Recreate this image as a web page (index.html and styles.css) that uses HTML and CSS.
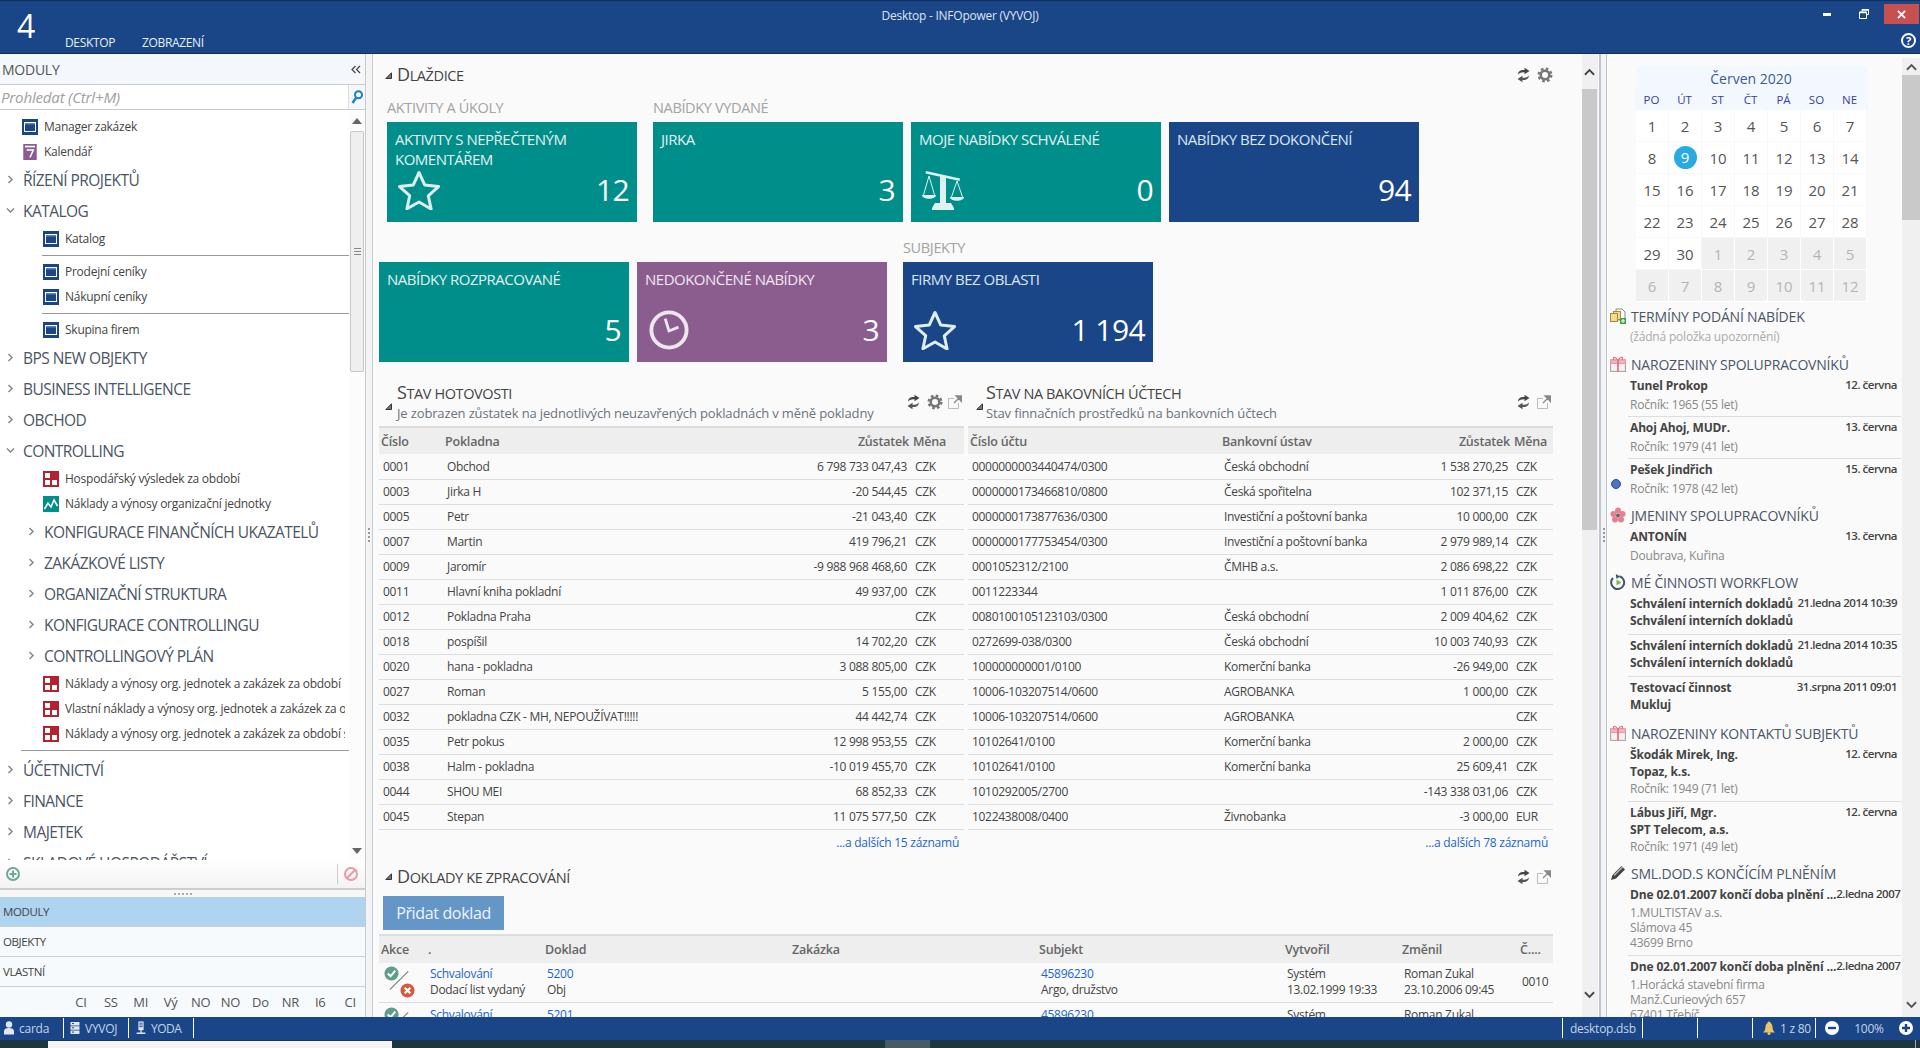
FILE: index.html
```html
<!DOCTYPE html>
<html lang="cs">
<head>
<meta charset="utf-8">
<title>Desktop - INFOpower (VYVOJ)</title>
<link rel="stylesheet" href="styles.css">
</head>
<body>
<svg class="defs" xmlns="http://www.w3.org/2000/svg">
  <symbol id="i-win" viewBox="0 0 16 16"><rect width="16" height="16" fill="#1a4687"/><rect x="2.500" y="3.500" width="11" height="9" fill="#1a4687" stroke="#fff"/><rect x="3" y="4" width="10" height="1.500" fill="#5d82b8"/></symbol>
  <symbol id="i-cal" viewBox="0 0 16 19"><rect width="16" height="19" fill="#8b5d8f"/><rect x="2" y="2" width="12" height="2" fill="#fff"/><path d="M4 7h8L8 16" fill="none" stroke="#fff" stroke-width="1.800"/></symbol>
  <symbol id="i-rep" viewBox="0 0 16 16"><rect width="16" height="16" fill="#b3222f"/><rect x="2" y="2" width="5" height="5" fill="#fff"/><rect x="9" y="2" width="5" height="5" fill="#fff"/><rect x="2" y="9" width="5" height="5" fill="#fff"/><rect x="9" y="9" width="5" height="5" fill="#fff"/><path d="M11.500 0l4 3-1.500 4h-5L8 3z" fill="#b3222f"/></symbol>
  <symbol id="i-chart" viewBox="0 0 16 16"><rect width="16" height="16" fill="#008e8a"/><path d="M1.500 13L5 7l3 4 3-7 3.500 6" fill="none" stroke="#fff" stroke-width="1.500"/></symbol>
  <symbol id="i-right" viewBox="0 0 6 9"><path d="M1 1l3.500 3.500L1 8" fill="none" stroke="#888" stroke-width="1.500"/></symbol>
  <symbol id="i-down" viewBox="0 0 9 6"><path d="M1 1l3.500 3.500L8 1" fill="none" stroke="#888" stroke-width="1.500"/></symbol>
  <symbol id="i-tri" viewBox="0 0 7 7"><path d="M6.500.8V6.500H.8z" fill="#777" stroke="#333"/></symbol>
  <symbol id="i-sync" viewBox="0 0 13 16"><path d="M1 7.500C1.200 4 4 2.700 7.500 3V.8L12.500 4 7.500 7.300V5.300C5 5 2.700 5.700 1 7.500z" fill="#444"/><path d="M12 8.500C11.800 12 9 13.300 5.500 13V15.200L.5 12 5.500 8.700V10.700C8 11 10.300 10.300 12 8.500z" fill="#555"/></symbol>
  <symbol id="i-gear" viewBox="0 0 16 16"><circle cx="8" cy="8" r="4.300" fill="none" stroke="#777" stroke-width="2.600"/><circle cx="8" cy="8" r="6.300" fill="none" stroke="#777" stroke-width="2.400" stroke-dasharray="2.600 2.350"/></symbol>
  <symbol id="i-exp" viewBox="0 0 14 14"><path d="M10.500 8v5.500h-10v-10H6" fill="none" stroke="#bbb"/><path d="M6 8l5-5M8 1h5.500v5.500z" fill="#888" stroke="#888" stroke-width="1.300"/></symbol>
  <symbol id="i-star" viewBox="0 0 42 40"><path d="M21 2.500l5.800 12.600 13.700 1.500-10.200 9.300 2.800 13.100L21 32l-12.100 6.800 2.800-13.100L1.500 16.600l13.700-1.500z" fill="none" stroke="#dceeee" stroke-width="3" stroke-linejoin="round"/></symbol>
  <symbol id="i-clock" viewBox="0 0 42 42"><circle cx="21" cy="21" r="18.500" fill="none" stroke="#eee6ee" stroke-width="4"/><path d="M17 9l4 13 10-4" fill="none" stroke="#eee6ee" stroke-width="3"/></symbol>
  <symbol id="i-scale" viewBox="0 0 42 40"><path d="M4 1l34 7.500-.5 2.500L3.500 3.500z" fill="#dff0f0"/><path d="M18 6h6v27h-6z" fill="#dff0f0"/><path d="M10 38l3-5h16l3 5v2H10z" fill="#dff0f0"/><path d="M7 6L1.500 25M7 6l5.500 19M35 11l-5.500 16M35 11l5.500 16" stroke="#dff0f0" fill="none"/><path d="M0 25h14c0 5-14 5-14 0zM28 27h14c0 5-14 5-14 0z" fill="#dff0f0"/></symbol>
  <symbol id="i-gift" viewBox="0 0 14 14"><rect x=".5" y="3.500" width="13" height="10" fill="#fbeef0" stroke="#aaa"/><rect x=".5" y="3.500" width="13" height="3" fill="#f3b9c2" stroke="#e79aa6"/><path d="M7 3.500v10" stroke="#e06f82" stroke-width="1.500"/><path d="M7 3.500C4 0 2 1 3.500 3.500M7 3.500c3-3.500 5-2.500 3.500 0" fill="none" stroke="#e06f82"/></symbol>
  <symbol id="i-flower" viewBox="0 0 16 16"><g fill="#e77f91"><circle cx="8" cy="3.500" r="3"/><circle cx="3.500" cy="7" r="3"/><circle cx="12.500" cy="7" r="3"/><circle cx="5" cy="12.500" r="3"/><circle cx="11" cy="12.500" r="3"/></g><circle cx="8" cy="8.500" r="2" fill="#666"/></symbol>
  <symbol id="i-wf" viewBox="0 0 16 16"><path d="M9.500 2.300A6.500 6.500 0 1 1 3 4" fill="none" stroke="#3f5568" stroke-width="2"/><path d="M5.800 0L10 2.500 6.500 5z" fill="#3f5568"/><path d="M6.500 5.500l5 3-5 3z" fill="#7fb356"/></symbol>
  <symbol id="i-pen" viewBox="0 0 16 16"><path d="M1 15l1.500-5L11.500 1l3.500 3.500-9 9z" fill="#444"/><path d="M3.500 10L12 1.500l1 1L4.500 11z" fill="#bbb"/></symbol>
  <symbol id="i-docs" viewBox="0 0 16 16"><path d="M6 1h6l3 3v8H6z" fill="#fff" stroke="#888"/><rect x="3.500" y="3.500" width="7" height="8" fill="#f3dc8b" stroke="#a58c3c"/><rect x=".5" y="5.500" width="7" height="8" fill="#f3dc8b" stroke="#a58c3c"/><rect x="10" y="10" width="6" height="6" fill="#3fa34a"/><path d="M13 11v4M11 13h4" stroke="#fff"/></symbol>
  <symbol id="i-ok" viewBox="0 0 16 16"><circle cx="8" cy="8" r="7.500" fill="#5f9d8c"/><path d="M4 8l3 3 5-6" fill="none" stroke="#fff" stroke-width="2.200"/></symbol>
  <symbol id="i-no" viewBox="0 0 16 16"><circle cx="8" cy="8" r="7.500" fill="#d9583f"/><path d="M5 5l6 6M11 5l-6 6" stroke="#fff" stroke-width="2.400"/></symbol>
</svg>

<div class="app">
  <header class="topbar">
    <div class="top-left">
      <span class="logo">4</span>
      <nav class="tabs"><span class="tab">DESKTOP</span><span class="tab">ZOBRAZENÍ</span></nav>
    </div>
    <div class="title">Desktop - INFOpower (VYVOJ)</div>
    <div class="top-right">
      <div class="winctl">
        <span class="wmin"></span>
        <svg class="wres" viewBox="0 0 10 10"><path d="M3 2.500V.5h6.500v5H7.500M.5 3h7v6.500h-7z" fill="none" stroke="#fff"/><path d="M.5 3.500h7M3 1h6.500" stroke="#fff" stroke-width="1.500"/></svg>
        <span class="wclose"><svg viewBox="0 0 10 10"><path d="M1 1l8 8M9 1l-8 8" stroke="#fff" stroke-width="2"/></svg></span>
      </div>
      <span class="help">?</span>
    </div>
  </header>

  <div class="work">
    <aside class="side">
      <div class="side-head"><span>MODULY</span>
        <svg class="collapse" viewBox="0 0 10 9"><path d="M4.500 1L1 4.500 4.500 8M9 1L5.500 4.500 9 8" fill="none" stroke="#444" stroke-width="1.200"/></svg>
      </div>
      <div class="search"><span class="ph">Prohledat (Ctrl+M)</span>
        <span class="sbtn"><svg viewBox="0 0 12 14"><circle cx="7.500" cy="4.800" r="3.500" fill="none" stroke="#1b7dc2" stroke-width="2"/><path d="M5 8l-3.500 5" stroke="#1b7dc2" stroke-width="2.400"/></svg></span>
      </div>
      <div class="treewrap">
        <div class="tree">
          <div class="item l1"><svg class="ic"><use href="#i-win"/></svg>Manager zakázek</div>
          <div class="item l1"><svg class="ic"><use href="#i-cal"/></svg>Kalendář</div>
          <div class="grp"><svg class="chev"><use href="#i-right"/></svg>ŘÍZENÍ PROJEKTŮ</div>
          <div class="grp"><svg class="chev"><use href="#i-down"/></svg>KATALOG</div>
          <div class="item l2"><svg class="ic"><use href="#i-win"/></svg>Katalog</div>
          <div class="sep"></div>
          <div class="item l2"><svg class="ic"><use href="#i-win"/></svg>Prodejní ceníky</div>
          <div class="item l2"><svg class="ic"><use href="#i-win"/></svg>Nákupní ceníky</div>
          <div class="sep"></div>
          <div class="item l2"><svg class="ic"><use href="#i-win"/></svg>Skupina firem</div>
          <div class="grp"><svg class="chev"><use href="#i-right"/></svg>BPS NEW OBJEKTY</div>
          <div class="grp"><svg class="chev"><use href="#i-right"/></svg>BUSINESS INTELLIGENCE</div>
          <div class="grp"><svg class="chev"><use href="#i-right"/></svg>OBCHOD</div>
          <div class="grp"><svg class="chev"><use href="#i-down"/></svg>CONTROLLING</div>
          <div class="item l2"><svg class="ic"><use href="#i-rep"/></svg>Hospodářský výsledek za období</div>
          <div class="item l2"><svg class="ic"><use href="#i-chart"/></svg>Náklady a výnosy organizační jednotky</div>
          <div class="grp nest"><svg class="chev"><use href="#i-right"/></svg>KONFIGURACE FINANČNÍCH UKAZATELŮ</div>
          <div class="grp nest"><svg class="chev"><use href="#i-right"/></svg>ZAKÁZKOVÉ LISTY</div>
          <div class="grp nest"><svg class="chev"><use href="#i-right"/></svg>ORGANIZAČNÍ STRUKTURA</div>
          <div class="grp nest"><svg class="chev"><use href="#i-right"/></svg>KONFIGURACE CONTROLLINGU</div>
          <div class="grp nest"><svg class="chev"><use href="#i-right"/></svg>CONTROLLINGOVÝ PLÁN</div>
          <div class="item l2"><svg class="ic"><use href="#i-rep"/></svg>Náklady a výnosy org. jednotek a zakázek za období</div>
          <div class="item l2"><svg class="ic"><use href="#i-rep"/></svg>Vlastní náklady a výnosy org. jednotek a zakázek za období</div>
          <div class="item l2"><svg class="ic"><use href="#i-rep"/></svg>Náklady a výnosy org. jednotek a zakázek za období s</div>
          <div class="sep wide"></div>
          <div class="grp"><svg class="chev"><use href="#i-right"/></svg>ÚČETNICTVÍ</div>
          <div class="grp"><svg class="chev"><use href="#i-right"/></svg>FINANCE</div>
          <div class="grp"><svg class="chev"><use href="#i-right"/></svg>MAJETEK</div>
          <div class="grp"><svg class="chev"><use href="#i-right"/></svg>SKLADOVÉ HOSPODÁŘSTVÍ</div>
        </div>
        <div class="tree-scroll">
          <svg class="arrow" viewBox="0 0 10 6"><path d="M5 0l5 6H0z" fill="#666"/></svg>
          <div class="tree-thumb"><span class="grip"></span></div>
          <div class="tree-rest"></div>
          <svg class="arrow" viewBox="0 0 10 6"><path d="M5 6l5-6H0z" fill="#666"/></svg>
        </div>
      </div>
      <div class="side-tools">
        <svg class="tool" viewBox="0 0 14 14"><circle cx="7" cy="7" r="6" fill="none" stroke="#6fa798" stroke-width="2"/><path d="M7 3.500v7M3.500 7h7" stroke="#6fa798" stroke-width="2"/></svg>
        <span class="tool-sep"></span>
        <svg class="tool" viewBox="0 0 14 14"><circle cx="7" cy="7" r="6" fill="none" stroke="#e89aa8" stroke-width="2"/><path d="M3 11l8-8" stroke="#e89aa8" stroke-width="2"/></svg>
      </div>
      <div class="side-split"><span class="hdots"></span></div>
      <div class="nav-tab active">MODULY</div>
      <div class="nav-tab">OBJEKTY</div>
      <div class="nav-tab">VLASTNÍ</div>
      <div class="nav-mini"><span>CI</span><span>SS</span><span>MI</span><span>Vý</span><span>NO</span><span>NO</span><span>Do</span><span>NR</span><span>I6</span><span>CI</span></div>
    </aside>

    <div class="split"><span class="vdots"></span></div>

    <main class="main">
      <div class="sec-head tiles-head">
        <svg class="tri"><use href="#i-tri"/></svg>
        <h2 class="sec-title">Dlaždice</h2>
        <span class="acts"><svg class="a-sync"><use href="#i-sync"/></svg><svg class="a-gear"><use href="#i-gear"/></svg></span>
      </div>

      <div class="tile-row first">
        <section class="tgroup">
          <div class="tlabel">AKTIVITY A ÚKOLY</div>
          <div class="tiles">
            <article class="tile teal"><div class="t-name">AKTIVITY S NEPŘEČTENÝM KOMENTÁŘEM</div><div class="t-foot"><svg class="t-ic"><use href="#i-star"/></svg><span class="t-num">12</span></div></article>
          </div>
        </section>
        <section class="tgroup">
          <div class="tlabel">NABÍDKY VYDANÉ</div>
          <div class="tiles">
            <article class="tile teal"><div class="t-name">JIRKA</div><div class="t-foot"><span class="t-num">3</span></div></article>
            <article class="tile teal"><div class="t-name">MOJE NABÍDKY SCHVÁLENÉ</div><div class="t-foot"><svg class="t-ic"><use href="#i-scale"/></svg><span class="t-num">0</span></div></article>
            <article class="tile navy"><div class="t-name">NABÍDKY BEZ DOKONČENÍ</div><div class="t-foot"><span class="t-num">94</span></div></article>
          </div>
        </section>
      </div>

      <div class="tile-row second">
        <section class="tgroup">
          <div class="tlabel">&nbsp;</div>
          <div class="tiles">
            <article class="tile teal"><div class="t-name">NABÍDKY ROZPRACOVANÉ</div><div class="t-foot"><span class="t-num">5</span></div></article>
            <article class="tile purple"><div class="t-name">NEDOKONČENÉ NABÍDKY</div><div class="t-foot"><svg class="t-ic"><use href="#i-clock"/></svg><span class="t-num">3</span></div></article>
          </div>
        </section>
        <section class="tgroup">
          <div class="tlabel">SUBJEKTY</div>
          <div class="tiles">
            <article class="tile navy"><div class="t-name">FIRMY BEZ OBLASTI</div><div class="t-foot"><svg class="t-ic"><use href="#i-star"/></svg><span class="t-num">1 194</span></div></article>
          </div>
        </section>
      </div>

      <div class="cols">
        <section class="col first-col">
          <div class="col-head">
            <svg class="tri"><use href="#i-tri"/></svg>
            <div class="col-titles"><h2 class="sec-title">Stav hotovosti</h2><p class="col-sub">Je zobrazen zůstatek na jednotlivých neuzavřených pokladnách v měně pokladny</p></div>
            <span class="acts"><svg class="a-sync"><use href="#i-sync"/></svg><svg class="a-gear"><use href="#i-gear"/></svg><svg class="a-exp"><use href="#i-exp"/></svg></span>
          </div>
          <table class="grid cash">
            <colgroup><col class="c1"><col class="c2"><col class="c3"><col class="c4"></colgroup>
            <thead><tr><th>Číslo</th><th>Pokladna</th><th class="r">Zůstatek</th><th>Měna</th></tr></thead>
            <tbody>
              <tr><td>0001</td><td>Obchod</td><td class="r">6 798 733 047,43</td><td>CZK</td></tr>
              <tr><td>0003</td><td>Jirka H</td><td class="r">-20 544,45</td><td>CZK</td></tr>
              <tr><td>0005</td><td>Petr</td><td class="r">-21 043,40</td><td>CZK</td></tr>
              <tr><td>0007</td><td>Martin</td><td class="r">419 796,21</td><td>CZK</td></tr>
              <tr><td>0009</td><td>Jaromír</td><td class="r">-9 988 968 468,60</td><td>CZK</td></tr>
              <tr><td>0011</td><td>Hlavní kniha pokladní</td><td class="r">49 937,00</td><td>CZK</td></tr>
              <tr><td>0012</td><td>Pokladna Praha</td><td class="r"></td><td>CZK</td></tr>
              <tr><td>0018</td><td>pospíšil</td><td class="r">14 702,20</td><td>CZK</td></tr>
              <tr><td>0020</td><td>hana - pokladna</td><td class="r">3 088 805,00</td><td>CZK</td></tr>
              <tr><td>0027</td><td>Roman</td><td class="r">5 155,00</td><td>CZK</td></tr>
              <tr><td>0032</td><td>pokladna CZK - MH, NEPOUŽÍVAT!!!!!</td><td class="r">44 442,74</td><td>CZK</td></tr>
              <tr><td>0035</td><td>Petr pokus</td><td class="r">12 998 953,55</td><td>CZK</td></tr>
              <tr><td>0038</td><td>Halm - pokladna</td><td class="r">-10 019 455,70</td><td>CZK</td></tr>
              <tr><td>0044</td><td>SHOU MEI</td><td class="r">68 852,33</td><td>CZK</td></tr>
              <tr><td>0045</td><td>Stepan</td><td class="r">11 075 577,50</td><td>CZK</td></tr>
            </tbody>
          </table>
          <div class="more">...a dalších 15 záznamů</div>
        </section>
        <section class="col second-col">
          <div class="col-head">
            <svg class="tri"><use href="#i-tri"/></svg>
            <div class="col-titles"><h2 class="sec-title">Stav na bakovních účtech</h2><p class="col-sub">Stav finnačních prostředků na bankovních účtech</p></div>
            <span class="acts"><svg class="a-sync"><use href="#i-sync"/></svg><svg class="a-exp"><use href="#i-exp"/></svg></span>
          </div>
          <table class="grid bank">
            <colgroup><col class="c1"><col class="c2"><col class="c3"><col class="c4"></colgroup>
            <thead><tr><th>Číslo účtu</th><th>Bankovní ústav</th><th class="r">Zůstatek</th><th>Měna</th></tr></thead>
            <tbody>
              <tr><td>0000000003440474/0300</td><td>Česká obchodní</td><td class="r">1 538 270,25</td><td>CZK</td></tr>
              <tr><td>0000000173466810/0800</td><td>Česká spořitelna</td><td class="r">102 371,15</td><td>CZK</td></tr>
              <tr><td>0000000173877636/0300</td><td>Investiční a poštovní banka</td><td class="r">10 000,00</td><td>CZK</td></tr>
              <tr><td>0000000177753454/0300</td><td>Investiční a poštovní banka</td><td class="r">2 979 989,14</td><td>CZK</td></tr>
              <tr><td>0001052312/2100</td><td>ČMHB a.s.</td><td class="r">2 086 698,22</td><td>CZK</td></tr>
              <tr><td>0011223344</td><td></td><td class="r">1 011 876,00</td><td>CZK</td></tr>
              <tr><td>0080100105123103/0300</td><td>Česká obchodní</td><td class="r">2 009 404,62</td><td>CZK</td></tr>
              <tr><td>0272699-038/0300</td><td>Česká obchodní</td><td class="r">10 003 740,93</td><td>CZK</td></tr>
              <tr><td>100000000001/0100</td><td>Komerční banka</td><td class="r">-26 949,00</td><td>CZK</td></tr>
              <tr><td>10006-103207514/0600</td><td>AGROBANKA</td><td class="r">1 000,00</td><td>CZK</td></tr>
              <tr><td>10006-103207514/0600</td><td>AGROBANKA</td><td class="r"></td><td>CZK</td></tr>
              <tr><td>10102641/0100</td><td>Komerční banka</td><td class="r">2 000,00</td><td>CZK</td></tr>
              <tr><td>10102641/0100</td><td>Komerční banka</td><td class="r">25 609,41</td><td>CZK</td></tr>
              <tr><td>1010292005/2700</td><td></td><td class="r">-143 338 031,06</td><td>CZK</td></tr>
              <tr><td>1022438008/0400</td><td>Živnobanka</td><td class="r">-3 000,00</td><td>EUR</td></tr>
            </tbody>
          </table>
          <div class="more">...a dalších 78 záznamů</div>
        </section>
      </div>

      <div class="sec-head docs">
        <svg class="tri"><use href="#i-tri"/></svg>
        <h2 class="sec-title">Doklady ke zpracování</h2>
        <span class="acts"><svg class="a-sync"><use href="#i-sync"/></svg><svg class="a-exp"><use href="#i-exp"/></svg></span>
      </div>
      <button class="add-btn">Přidat doklad</button>
      <table class="grid docs-table">
        <colgroup><col class="d1"><col class="d2"><col class="d3"><col class="d4"><col class="d5"><col class="d6"><col class="d7"><col class="d8"></colgroup>
        <thead><tr><th>Akce</th><th>.</th><th>Doklad</th><th>Zakázka</th><th>Subjekt</th><th>Vytvořil</th><th>Změnil</th><th>Č....</th></tr></thead>
        <tbody>
          <tr>
            <td class="act-cell"><span class="act-ic"><svg class="ok"><use href="#i-ok"/></svg><i class="slash"></i><svg class="no"><use href="#i-no"/></svg></span></td>
            <td><a class="lnk">Schvalování</a><br>Dodací list vydaný</td>
            <td><a class="lnk">5200</a><br>Obj</td>
            <td></td>
            <td><a class="lnk">45896230</a><br>Argo, družstvo</td>
            <td>Systém<br>13.02.1999 19:33</td>
            <td>Roman Zukal<br>23.10.2006 09:45</td>
            <td>0010</td>
          </tr>
          <tr>
            <td class="act-cell"><span class="act-ic"><svg class="ok"><use href="#i-ok"/></svg><i class="slash"></i><svg class="no"><use href="#i-no"/></svg></span></td>
            <td><a class="lnk">Schvalování</a><br>Dodací list vydaný</td>
            <td><a class="lnk">5201</a><br>Obj</td>
            <td></td>
            <td><a class="lnk">45896230</a><br>Argo, družstvo</td>
            <td>Systém<br>13.02.1999 19:33</td>
            <td>Roman Zukal<br>23.10.2006 09:45</td>
            <td>0010</td>
          </tr>
        </tbody>
      </table>
    </main>

    <div class="vbar">
      <div class="vbtn"><svg viewBox="0 0 12 8"><path d="M1 7l5-5 5 5" fill="none" stroke="#444" stroke-width="2"/></svg></div>
      <div class="vthumb"></div>
      <div class="vtrack"></div>
      <div class="vbtn down"><svg viewBox="0 0 12 8"><path d="M1 1l5 5 5-5" fill="none" stroke="#444" stroke-width="2"/></svg></div>
    </div>

    <div class="split2"><span class="vdots"></span></div>

    <aside class="rpanel">
      <section class="calendar">
        <div class="cal-title">Červen 2020</div>
        <div class="cal-days"><span>PO</span><span>ÚT</span><span>ST</span><span>ČT</span><span>PÁ</span><span>SO</span><span>NE</span></div>
        <div class="cal-grid">
          <span>1</span><span>2</span><span>3</span><span>4</span><span>5</span><span>6</span><span>7</span>
          <span>8</span><span class="today"><b>9</b></span><span>10</span><span>11</span><span>12</span><span>13</span><span>14</span>
          <span>15</span><span>16</span><span>17</span><span>18</span><span>19</span><span>20</span><span>21</span>
          <span>22</span><span>23</span><span>24</span><span>25</span><span>26</span><span>27</span><span>28</span>
          <span>29</span><span>30</span><span class="off">1</span><span class="off">2</span><span class="off">3</span><span class="off">4</span><span class="off">5</span>
          <span class="off">6</span><span class="off">7</span><span class="off">8</span><span class="off">9</span><span class="off">10</span><span class="off">11</span><span class="off">12</span>
        </div>
      </section>

      <h3 class="rp-head h1"><svg><use href="#i-docs"/></svg>TERMÍNY PODÁNÍ NABÍDEK</h3>
      <p class="rp-none">(žádná položka upozornění)</p>

      <h3 class="rp-head h2"><svg><use href="#i-gift"/></svg>NAROZENINY SPOLUPRACOVNÍKŮ</h3>
      <div class="rit line"><div class="nm"><b>Tunel Prokop</b><em>12. června</em></div><div class="sub">Ročník: 1965 (55 let)</div></div>
      <div class="rit line"><div class="nm"><b>Ahoj Ahoj, MUDr.</b><em>13. června</em></div><div class="sub">Ročník: 1979 (41 let)</div></div>
      <div class="rit ball"><svg class="ballic" viewBox="0 0 10 10"><circle cx="5" cy="5" r="4.500" fill="#4c72c2" stroke="#2f4f94"/></svg><div class="nm"><b>Pešek Jindřich</b><em>15. června</em></div><div class="sub">Ročník: 1978 (42 let)</div></div>

      <h3 class="rp-head h3"><svg><use href="#i-flower"/></svg>JMENINY SPOLUPRACOVNÍKŮ</h3>
      <div class="rit"><div class="nm"><b>ANTONÍN</b><em>13. června</em></div><div class="sub">Doubrava, Kuřina</div></div>

      <h3 class="rp-head h4"><svg><use href="#i-wf"/></svg>MÉ ČINNOSTI WORKFLOW</h3>
      <div class="rit line two"><div class="nm"><b>Schválení interních dokladů</b><em>21.ledna 2014 10:39</em></div><div class="nm"><b>Schválení interních dokladů</b></div></div>
      <div class="rit line two"><div class="nm"><b>Schválení interních dokladů</b><em>21.ledna 2014 10:35</em></div><div class="nm"><b>Schválení interních dokladů</b></div></div>
      <div class="rit two"><div class="nm"><b>Testovací činnost</b><em>31.srpna 2011 09:01</em></div><div class="nm"><b>Mukluj</b></div></div>

      <h3 class="rp-head h5"><svg><use href="#i-gift"/></svg>NAROZENINY KONTAKTŮ SUBJEKTŮ</h3>
      <div class="rit line three"><div class="nm"><b>Škodák Mirek, Ing.</b><em>12. června</em></div><div class="nm"><b>Topaz, k.s.</b></div><div class="sub flat">Ročník: 1949 (71 let)</div></div>
      <div class="rit three"><div class="nm"><b>Lábus Jiří, Mgr.</b><em>12. června</em></div><div class="nm"><b>SPT Telecom, a.s.</b></div><div class="sub flat">Ročník: 1971 (49 let)</div></div>

      <h3 class="rp-head h6"><svg><use href="#i-pen"/></svg>SML.DOD.S KONČÍCÍM PLNĚNÍM</h3>
      <div class="rit line con"><div class="nm"><b>Dne 02.01.2007 končí doba plnění ...</b><em>2.ledna 2007</em></div><div class="addr first">1.MULTISTAV a.s.</div><div class="addr">Slámova 45</div><div class="addr">43699 Brno</div></div>
      <div class="rit con"><div class="nm"><b>Dne 02.01.2007 končí doba plnění ...</b><em>2.ledna 2007</em></div><div class="addr first">1.Horácká stavební firma</div><div class="addr">Manž.Curieových 657</div><div class="addr">67401 Třebíč</div></div>
    </aside>

    <div class="vbar rbar">
      <div class="rbtn"><svg viewBox="0 0 12 8"><path d="M1 7l5-5 5 5" fill="none" stroke="#555" stroke-width="2"/></svg></div>
      <div class="rthumb"></div>
      <div class="vtrack"></div>
      <div class="rbtn down"><svg viewBox="0 0 12 8"><path d="M1 1l5 5 5-5" fill="none" stroke="#555" stroke-width="2"/></svg></div>
    </div>
  </div>

  <footer class="status">
    <div class="st s-user"><svg viewBox="0 0 10 14"><circle cx="5" cy="3.500" r="3.200" fill="#dfe6f0"/><path d="M0 13.500V10c0-2 2-3 5-3s5 1 5 3v3.500z" fill="#dfe6f0"/></svg>carda</div>
    <div class="st s-db"><svg viewBox="0 0 10 14"><path d="M.5 1h9v3.500h-9zM.5 5.300h9v3.500h-9zM.5 9.600h9v3.500h-9z" fill="#dfe6f0"/><path d="M2 2.500h2M2 6.800h2M2 11.100h2" stroke="#1a4687"/></svg>VYVOJ</div>
    <div class="st s-srv"><svg viewBox="0 0 10 16"><path d="M2 .5h6v10H2z" fill="#dfe6f0"/><path d="M3 2.500h4M3 4.500h4M3 6.500h4" stroke="#1a4687"/><path d="M5 10v3M0 14h10" stroke="#dfe6f0" stroke-width="1.500"/></svg>YODA</div>
    <div class="st-fill"></div>
    <div class="st s-file">desktop.dsb</div>
    <div class="st s-empty1"></div>
    <div class="st s-empty2"></div>
    <div class="st s-bell"><svg viewBox="0 0 12 14"><path d="M6 .5C7 .5 7.500 1.500 7.500 2 9.500 3 9.500 5.500 9.800 8c.2 1.500 1.200 2.500 2 3.500H.2c.8-1 1.800-2 2-3.500.3-2.500.3-5 2.300-6C4.500 1.500 5 .5 6 .5z" fill="#e9c46a"/><circle cx="6" cy="12.500" r="1.500" fill="#e9c46a"/></svg>1 z 80</div>
    <div class="st s-zoom">
      <svg viewBox="0 0 14 14"><circle cx="7" cy="7" r="7" fill="#fff"/><rect x="3" y="5.800" width="8" height="2.400" fill="#1a4687"/></svg>
      <span>100%</span>
      <svg viewBox="0 0 14 14"><circle cx="7" cy="7" r="7" fill="#fff"/><path d="M7 3v8M3 7h8" stroke="#1a4687" stroke-width="2.400"/></svg>
    </div>
  </footer>
  <div class="taskbar">
    <span class="tb-win"></span>
    <span class="tb-btn"></span>
    <span class="tb-time">10:02</span>
    <span class="tb-end"></span>
  </div>
</div>
</body>
</html>
```

FILE: styles.css
```css
*{box-sizing:border-box}
html,body{margin:0;padding:0;height:100%;overflow:hidden}
body{font-family:"Open Sans","Noto Sans",sans-serif;font-size:12px;color:#444;letter-spacing:-.25px;background:#fafafa}
.defs{display:none}
svg{display:block;flex:none}
.app{display:flex;flex-direction:column;height:1048px;width:1920px;overflow:hidden}

/* top bar */
.topbar{height:54px;flex:none;display:grid;grid-template-columns:1fr auto 1fr;background:#1a4687;border-top:1px solid #102f5d;border-bottom:1px solid #102f5d;color:#fff}
.top-left{display:flex;align-items:flex-start}
.logo{font-size:32px;line-height:44px;width:65px;padding-left:17px;margin-top:3px;font-weight:400}
.tabs{display:flex;gap:27px;margin-top:34px;font-size:12px;line-height:16px;color:#e8eef6;letter-spacing:-.35px}
.title{font-size:12px;line-height:16px;margin-top:7px;color:#dde5f0}
.top-right{display:flex;flex-direction:column;align-items:flex-end}
.winctl{display:flex;align-items:flex-start;height:23px}
.wmin{width:8px;height:3px;background:#fff;margin:12px 28px 0 0}
.wres{width:10px;height:10px;margin:8px 15px 0 0}
.wclose{width:35px;height:20px;background:#c75050;margin:3px 1px 0 0;display:flex;align-items:center;justify-content:center}
.wclose svg{width:9px;height:9px}
.help{width:15px;height:15px;border:2px solid #fff;border-radius:50%;font-size:11px;font-weight:700;line-height:11px;text-align:center;margin:9px 4px 0 0;letter-spacing:0}

.work{flex:none;height:963px;display:flex;overflow:hidden}

/* sidebar */
.side{width:366px;flex:none;display:flex;flex-direction:column;border-right:1px solid #c9c9c9;background:#fff}
.side-head{height:31px;flex:none;display:flex;align-items:center;justify-content:space-between;padding:0 4px 0 2px;background:#f4f8fc;border-bottom:1px solid #ccc;font-size:14px;color:#555}
.collapse{width:10px;height:9px}
.search{height:25px;flex:none;display:flex;align-items:center;justify-content:space-between;border-bottom:1px solid #ccc;background:#fff}
.ph{font-size:15.200px;font-style:italic;color:#a0a0a0;padding-left:1px}
.sbtn{width:17px;height:24px;border-left:1px solid #ddd;background:#f4f8fc;display:flex;align-items:center;justify-content:center}
.sbtn svg{width:12px;height:14px}
.treewrap{height:750px;flex:none;display:flex;overflow:hidden}
.tree{width:349px;flex:none;padding:4px 4px 0 0;overflow:hidden;background:#fff}
.item,.grp{display:flex;align-items:center;white-space:nowrap;overflow:hidden}
.item{height:25px;font-size:12px;gap:6px}
.ic{width:16px;height:16px}
.l1{padding-left:22px}
.l2{padding-left:43px}
.grp{height:31px;font-size:15.500px;padding-left:6px;color:#4b5563;letter-spacing:-.55px}
.chev{width:9px;height:9px;margin-right:8px}
.grp.nest{padding-left:27px}
.sep{height:8px;margin-left:42px;margin-right:-4px;background:linear-gradient(#0000 4px,#999 4px,#999 5px,#0000 5px)}
.sep.wide{margin-left:21px}
.tree-scroll{width:16px;flex:none;display:flex;flex-direction:column;align-items:center;background:#fcfcfc;padding:8px 1px 6px}
.arrow{width:10px;height:6px;flex:none}
.tree-thumb{width:14px;height:241px;margin-top:7px;border:1px solid #c8c8c8;border-radius:2px;background:#efefef;display:flex;align-items:center;justify-content:center}
.grip{width:7px;height:7px;background:repeating-linear-gradient(#888 0 1px,#0000 1px 3px)}
.tree-rest{flex:1}
.side-tools{height:28px;flex:none;display:flex;align-items:center;justify-content:space-between;padding:0 7px 0 6px;background:linear-gradient(#fff,#f3f3f3)}
.tool{width:14px;height:14px}
.tool-sep{width:1px;height:20px;background:#ccc;margin-left:auto;margin-right:6px}
.side-split{height:9px;flex:none;border-top:2px solid #ccc;display:flex;align-items:center;justify-content:center;background:#f7f7f7}
.hdots{width:18px;height:2px;background:repeating-linear-gradient(90deg,#aaa 0 2px,#0000 2px 4px)}
.nav-tab{height:30px;flex:none;font-size:11.500px;line-height:29px;padding-left:3px;border-bottom:1px solid #c8ced6;background:#f6fafd;color:#444;letter-spacing:-.4px}
.nav-tab.active{background:#aed4f0}
.nav-mini{height:30px;flex:none;display:flex;padding-left:66px;background:#f7fafd;font-size:13px;line-height:30px;color:#555}
.nav-mini span{width:30px;text-align:center}

/* splitters */
.split{width:7px;flex:none;border-right:1px solid #c2cad6;background:#f4f4f4;display:flex;align-items:center;justify-content:center}
.split2{width:8px;margin-left:1px;flex:none;border-left:2px solid #bcc5d2;border-right:1px solid #bcc5d2;background:#f4f4f4;display:flex;align-items:center;justify-content:center}
.vdots{width:2px;height:16px;background:repeating-linear-gradient(#999 0 2px,#0000 2px 4px)}

/* main */
.main{width:1209px;flex:none;padding:9px 29px 0 6px;overflow:hidden;background:#fafafa}
.sec-head{height:24px;display:flex;align-items:center}
.tri{width:7px;height:7px;margin-left:6px}
.sec-title{margin:0;font-size:14.500px;line-height:20px;font-weight:400;text-transform:uppercase;color:#444;letter-spacing:-.4px}
.sec-title::first-letter{font-size:18px}
.sec-head .sec-title{margin-left:5px}
.acts{margin-left:auto;display:flex;align-items:center;gap:7px;padding-right:2px}
.tiles-head .acts{padding-right:0}
.first-col .a-exp{margin-left:-2px}
.a-sync{width:13px;height:16px}
.a-gear{width:16px;height:16px}
.a-exp{width:14px;height:14px}
.tile-row{display:flex;gap:16px}
.tile-row.first{padding-left:8px;margin-top:11px}
.tile-row.second{margin-top:16px}
.tlabel{height:18px;line-height:20px;margin-bottom:6px;font-size:14.500px;color:#a3a3a3;white-space:nowrap;letter-spacing:-.35px}
.tiles{display:flex;gap:8px}
.tile{width:250px;height:100px;padding:7px 8px 8px;display:flex;flex-direction:column;color:#e3f1f1}
.tile.teal{background:#008e8a}
.tile.navy{background:#1a4687;color:#dbe6f3}
.tile.purple{background:#8b5d8f;color:#f0e6f1}
.t-name{font-size:15px;line-height:20px;letter-spacing:-.5px;height:40px}
.t-foot{display:flex;align-items:center;height:46px;margin-top:-2px}
.t-ic{width:42px;height:40px;margin-left:3px}
.t-num{margin-left:auto;font-size:30px;line-height:40px;color:#fff;letter-spacing:-.6px}

.cols{display:flex;gap:4px;margin-top:21px}
.col{width:585px}
.col-head{height:43px;display:flex;align-items:center;padding-bottom:5px}
.col-titles{margin-left:5px;flex:1;white-space:nowrap}
.col-sub{margin:0;font-size:13px;line-height:18px;color:#6a7280;letter-spacing:-.14px}
.col .tri{margin-top:8px}
.second-col .col-head{padding-left:2px}
.second-col .col-titles{margin-left:3px}
.grid{border-collapse:collapse;table-layout:fixed;width:100%;font-size:12px}
.grid th{height:27px;padding:0 2px;text-align:left;font-weight:600;font-size:12.500px;background:#eee;border-top:2px solid #ddd;color:#666;white-space:nowrap;overflow:hidden;letter-spacing:-.2px}
.grid td{height:25px;padding:0 4px;border-bottom:1px solid #ddd;white-space:nowrap;overflow:hidden;letter-spacing:-.3px}
.grid .r{text-align:right}
.cash .c1{width:64px}.cash .c2{width:252px}.cash .c3{width:216px}.cash .c4{width:53px}
.bank .c1{width:252px}.bank .c2{width:150px}.bank .c3{width:142px}.bank .c4{width:41px}
.more{margin-top:5px;line-height:16px;height:16px;text-align:right;padding-right:5px;color:#1a66cc;letter-spacing:-.25px}
.sec-head.docs{margin-top:14px}
.add-btn{display:block;margin:7px 0 4px 4px;width:121px;height:34px;border:0;padding:0;background:#6496c8;color:#f0f5fa;font:400 16px "Open Sans","Noto Sans",sans-serif;letter-spacing:-.35px}
.d1{width:47px}.d2{width:117px}.d3{width:247px}.d4{width:247px}.d5{width:246px}.d6{width:117px}.d7{width:118px}.d8{width:35px}
.docs-table th{height:28px}
.docs-table td{height:40px;line-height:16px;vertical-align:middle}
.lnk{color:#1a66cc}
.act-cell{padding:0 !important}
.act-ic{display:block;position:relative;width:34px;height:34px;margin-left:4px}
.ok{position:absolute;left:1px;top:1px;width:15px;height:15px}
.no{position:absolute;left:17px;top:18px;width:15px;height:15px}
.slash{position:absolute;left:3px;top:15px;width:26px;height:1px;background:#777;transform:rotate(-45deg)}

/* scrollbars */
.vbar{width:16px;flex:none;display:flex;flex-direction:column;background:#f0f0f0;padding-right:1px}
.vbtn{height:35px;flex:none;display:flex;align-items:center;justify-content:center}
.vbtn svg,.rbtn svg{width:11px;height:8px}
.vbtn.down{height:44px}
.vthumb{height:441px;flex:none;background:#c9c9c9}
.vtrack{flex:1}
.rbar{width:19px;padding:0;background:#f0f0f0;border-top:4px solid #fafafa}
.rbtn{height:17px;flex:none;display:flex;align-items:center;justify-content:center}
.rbtn.down{height:24px}
.rthumb{height:145px;flex:none;background:#c9c9c9}

/* right panel */
.rpanel{width:295px;flex:none;padding-top:12px;overflow:hidden;background:#fafafa}
.calendar{margin-left:29px;width:232px}
.cal-title{height:24px;line-height:26px;text-align:center;font-size:14px;color:#3c5a99;background:#f2f8fd;letter-spacing:0;padding-right:2px}
.cal-days{height:20px;display:grid;grid-template-columns:repeat(7,33px);padding-right:1px;background:#f2f8fd;font-size:11.500px;line-height:20px;text-align:center;color:#3a3f9f;letter-spacing:0;margin-left:-1px}
.cal-grid{display:grid;grid-template-columns:repeat(7,33px);grid-auto-rows:32px;font-size:15px;color:#555;letter-spacing:0}
.cal-grid span{display:flex;align-items:center;justify-content:center;background:#fff;border-right:1px solid #f8f8f8;border-bottom:1px solid #f8f8f8}
.cal-grid .off{background:#f0f0f0;color:#b5b5b5;border-color:#fff}
.cal-grid b{width:23px;height:23px;border-radius:50%;background:#29abe2;color:#fff;font-weight:400;line-height:23px;text-align:center}
.rp-head{display:flex;align-items:center;height:20px;margin:0;padding-left:3px;font-size:14px;font-weight:400;color:#4a5568;white-space:nowrap;letter-spacing:-.2px}
.rp-head svg{width:16px;height:16px;margin-right:5px}
.rp-head.h1{margin-top:4px}
.rp-head.h2{margin-top:7px}
.rp-head.h3{margin-top:5px}
.rp-head.h4{margin-top:5px}
.rp-head.h5{margin-top:5px}
.rp-head.h6{margin-top:4px}
.rp-none{margin:1px 0 0 23px;font-size:12px;line-height:20px;color:#aaa;letter-spacing:-.2px}
.rit{margin:1px 1px 0 21px;padding:2px 4px 3px 2px}
.rit.line{border-bottom:1px solid #ddd}
.rit.two{padding-bottom:5px}
.rit.three{padding-bottom:4px}
.rit.con{padding-right:2px;padding-bottom:5px}
.rit+.rit{margin-top:0}
.rit.ball{position:relative;padding-bottom:3px}
.ballic{position:absolute;left:-17px;top:20px;width:10px;height:10px}
.nm{display:flex;justify-content:space-between;line-height:17px;white-space:nowrap;letter-spacing:-.15px}
.nm b{font-weight:700;color:#444}
.nm em{font-style:normal;font-weight:600;color:#444;font-size:11.500px;margin-top:-1px;letter-spacing:-.5px}
.sub{margin-top:2px;line-height:17px;color:#888;letter-spacing:-.2px}
.sub.flat{margin-top:0}
.addr{line-height:15px;color:#888;letter-spacing:-.2px}
.addr.first{margin-top:2px}

/* status */
.status{height:23px;flex:none;display:flex;align-items:stretch;background:#1a4687;color:#c6d3e6;font-size:12px;line-height:23px}
.st{display:flex;align-items:center;gap:5px;border-right:1px solid #fff;margin:1px 0 2px}
.st svg{width:10px;height:14px}
.s-user{width:64px;padding-left:4px}
.s-db{width:65px;padding-left:6px}
.s-srv{width:65px;padding-left:7px;letter-spacing:-.5px}
.st-fill{flex:1;margin-right:1px}
.s-file{width:81px;padding-left:7px;border-left:1px solid #fff}
.s-empty1{width:55px}
.s-empty2{width:55px}
.s-bell{width:63px;padding-left:10px}
.s-bell svg{width:12px;height:14px}
.s-zoom{border-right:0;width:104px;padding:0 7px 0 9px;justify-content:space-between}
.s-zoom svg{width:14px;height:14px}
.taskbar{height:8px;flex:none;display:flex;background:#1f3640;overflow:hidden;color:#fff}
.tb-win{margin-left:48px;width:344px;margin-top:1px;background:#f4f4f4}
.tb-btn{margin-left:493px;width:45px;background:#485a64}
.tb-time{margin-left:890px;font-size:11px;line-height:14px;padding-top:5px;height:20px;letter-spacing:0}
.tb-end{margin-left:auto;margin-right:4px;width:1px;background:#aab}
```
